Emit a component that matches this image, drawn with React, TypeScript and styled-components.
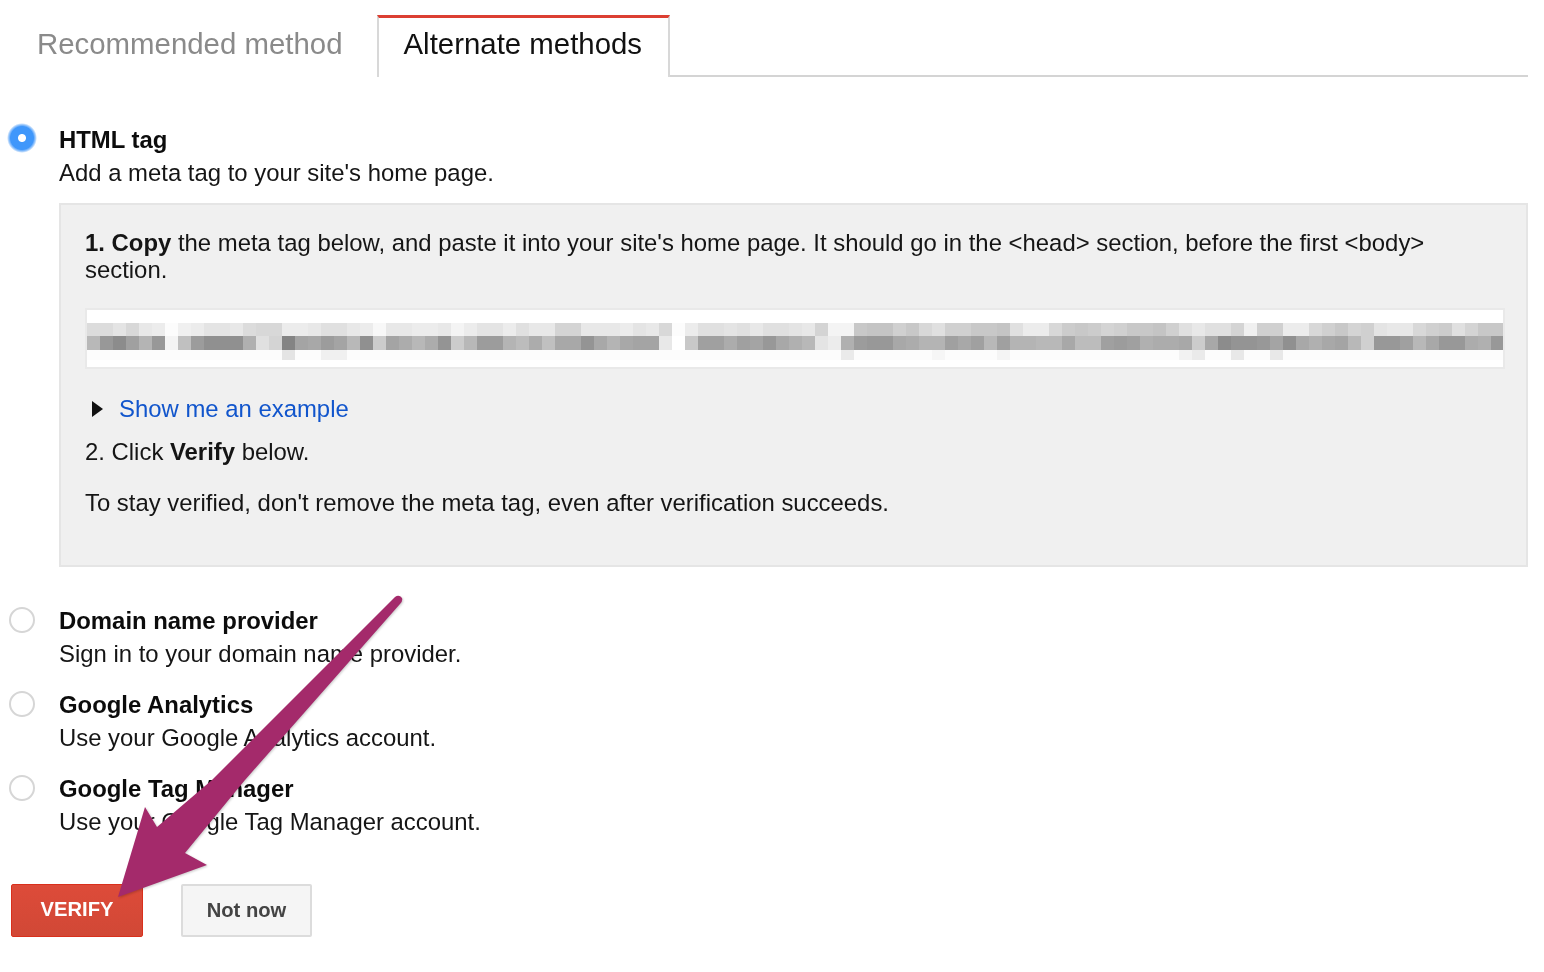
import styled, { createGlobalStyle } from "styled-components";

const GlobalStyle = createGlobalStyle`
  html, body {
    margin: 0;
    padding: 0;
    background: #fff;
  }
  body {
    font-family: "Liberation Sans", Arial, sans-serif;
    color: #111;
  }
`;

const Page = styled.div`
  position: relative;
  width: 1544px;
  height: 972px;
  overflow: hidden;
  box-sizing: border-box;
  padding: 15px 16px 0 11px;
  filter: blur(0.35px);
`;

const TabBar = styled.div`
  display: flex;
  height: 62px;
  box-sizing: border-box;
  border-bottom: 2px solid #d4d4d4;
`;

const Tab = styled.div<{ $active?: boolean }>`
  box-sizing: border-box;
  height: 62px;
  font-size: 29.4px;
  line-height: 52px;
  padding: ${(p) => (p.$active ? "0 26px 0 25px" : "3px 34px 0 26px")};
  color: ${(p) => (p.$active ? "#111" : "#8a8a8a")};
  background: #fff;
  ${(p) =>
    p.$active &&
    `
    border-top: 3px solid #dc3f32;
    border-left: 2px solid #d8d8d8;
    border-right: 2px solid #d8d8d8;
  `}
`;

const Methods = styled.div`
  display: flex;
  flex-direction: column;
`;

const Option = styled.div<{ $mt: number }>`
  display: flex;
  margin-top: ${(p) => p.$mt}px;
`;

const Radio = styled.div<{ $checked?: boolean }>`
  flex: none;
  box-sizing: border-box;
  border-radius: 50%;
  ${(p) =>
    p.$checked
      ? `
    width: 30px;
    height: 30px;
    margin: 0 22px 0 -4px;
    background: radial-gradient(circle, #fff 0 3.5px, #3f97fb 4.5px 11.5px, #a5cdfb 13.5px, #fff 15px);
    `
      : `
    width: 26px;
    height: 26px;
    margin: 3px 24px 0 -2px;
    background: #fff;
    border: 2px solid #d6d6d6;
    `}
`;

const OptionText = styled.div`
  display: flex;
  flex-direction: column;
  flex: 1;
`;

const OptionTitle = styled.div`
  font-size: 23.9px;
  line-height: 34px;
  font-weight: 700;
  color: #0c0c0c;
`;

const OptionHint = styled.div`
  font-size: 23.9px;
  line-height: 32px;
  color: #151515;
`;

const Panel = styled.div`
  box-sizing: border-box;
  height: 364px;
  margin: 14px 0 0 48px;
  padding: 24px 21px 0 24px;
  background: #f0f0f0;
  border: 2px solid #e5e5e5;
`;

const PanelText = styled.div<{ $mt?: number }>`
  font-size: 23.9px;
  line-height: 27px;
  margin-top: ${(p) => p.$mt ?? 0}px;
  color: #151515;
`;

const SnippetBox = styled.div`
  box-sizing: border-box;
  height: 61px;
  margin-top: 25px;
  padding-top: 13px;
  background: #fff;
  border: 2px solid #e9e9e9;
  overflow: hidden;
`;

const Mosaic = styled.div`
  display: grid;
  grid-template-columns: repeat(109, 13px);
  grid-template-rows: 13px 14px 10px;
`;

const ShowRow = styled.div`
  display: flex;
  align-items: center;
  margin-top: 26px;
  height: 27px;
`;

const Caret = styled.div`
  width: 0;
  height: 0;
  border-left: 11px solid #111;
  border-top: 8px solid transparent;
  border-bottom: 8px solid transparent;
  margin: 0 16px 0 7px;
`;

const ExampleLink = styled.a`
  font-size: 23.9px;
  color: #1155cc;
  text-decoration: none;
`;

const Actions = styled.div`
  display: flex;
  gap: 38px;
  margin-top: 46px;
`;

const Button = styled.div<{ $primary?: boolean }>`
  box-sizing: border-box;
  height: 53px;
  border-radius: 2px;
  font-size: 20.2px;
  font-weight: 700;
  line-height: 49px;
  text-align: center;
  ${(p) =>
    p.$primary
      ? `
    width: 132px;
    color: #fff;
    background: linear-gradient(#dd4b39, #d14836);
    border: 1px solid #d9301c;
  `
      : `
    width: 131px;
    color: #444;
    background: #f5f5f5;
    border: 2px solid #dcdcdc;
  `}
`;

const Arrow = styled.svg`
  position: absolute;
  left: 0;
  top: 0;
  pointer-events: none;
  filter: drop-shadow(1px 1px 1px rgba(0, 0, 0, 0.2));
`;

// grey levels of the pixelated meta tag, one hex pair per 13px cell
const topRow =
  "dc dc e4 d8 e8 ec fc f0 ec e4 e4 e8 dc d8 d8 ec ec e8 e0 e0 e8 ec f8 e8 e8 ec ec e8 f4 ec e4 e4 ec e0 e8 e8 d4 d4 e8 e8 e8 ec e4 e8 d8 fc ec e0 e0 e4 e0 e8 " +
  "e0 e0 e4 e8 d4 f4 f4 c8 c4 c4 d0 c8 d8 e0 d0 d0 c8 c8 c4 e0 ec ec d8 cc c8 cc d4 d0 c8 c8 c4 d0 e0 e8 e0 e0 d4 f0 d0 d0 ec ec d8 d0 c8 d4 d0 e4 e8 e8 d8 d0 cc e0 d4 c8 c8";
const midRow =
  "b8 98 8c a0 b4 98 f4 c0 9c 90 90 90 b0 e0 d4 84 a4 a8 9c a4 b8 90 cc a4 ac b8 ac 94 cc b8 9c 9c b4 bc ac c0 a8 a8 94 a8 b4 a8 a4 a4 e8 ff c8 a0 a0 ac a0 a4 " +
  "98 a8 b0 b8 e4 ec b0 9c 98 98 a8 ac b4 b4 a0 a8 a0 b8 a0 b4 b4 b8 b8 a8 bc bc a0 9c a0 b0 ac ac a8 cc a8 8c 94 94 98 a4 90 a8 b0 a8 a4 b8 d0 98 98 a0 b8 a8 98 98 ac b0 98";
const lowSpots: Record<number, string> = { 15: "e4", 18: "f0", 19: "f0", 58: "ea", 65: "f6", 70: "f4", 84: "f2", 85: "ea", 88: "e8", 91: "e8" };

const rows = [topRow.split(" "), midRow.split(" "), Array.from({ length: 109 }, (_, i) => lowSpots[i] ?? "fc")];

const methods = [
  { title: "Domain name provider", hint: "Sign in to your domain name provider.", mt: 37 },
  { title: "Google Analytics", hint: "Use your Google Analytics account.", mt: 18 },
  { title: "Google Tag Manager", hint: "Use your Google Tag Manager account.", mt: 18 },
];

export default function App() {
  return (
    <Page>
      <GlobalStyle />
      <TabBar>
        <Tab>Recommended method</Tab>
        <Tab $active>Alternate methods</Tab>
      </TabBar>
      <Methods>
        <Option $mt={46}>
          <Radio $checked />
          <OptionText>
            <OptionTitle>HTML tag</OptionTitle>
            <OptionHint>Add a meta tag to your site's home page.</OptionHint>
          </OptionText>
        </Option>
        <Panel>
          <PanelText>
            <b>1. Copy</b> the meta tag below, and paste it into your site's home page. It should go
            in the &lt;head&gt; section, before the first &lt;body&gt; section.
          </PanelText>
          <SnippetBox>
            <Mosaic>
              {rows.flatMap((row, r) =>
                row.map((g, i) => <div key={`${r}-${i}`} style={{ background: `#${g}${g}${g}` }} />)
              )}
            </Mosaic>
          </SnippetBox>
          <ShowRow>
            <Caret />
            <ExampleLink>Show me an example</ExampleLink>
          </ShowRow>
          <PanelText $mt={16}>
            2. Click <b>Verify</b> below.
          </PanelText>
          <PanelText $mt={24}>
            To stay verified, don't remove the meta tag, even after verification succeeds.
          </PanelText>
        </Panel>
        {methods.map((m) => (
          <Option key={m.title} $mt={m.mt}>
            <Radio />
            <OptionText>
              <OptionTitle>{m.title}</OptionTitle>
              <OptionHint>{m.hint}</OptionHint>
            </OptionText>
          </Option>
        ))}
      </Methods>
      <Actions>
        <Button $primary>VERIFY</Button>
        <Button>Not now</Button>
      </Actions>
      <Arrow width="1544" height="972" viewBox="0 0 1544 972">
        <path
          d="M118 897 L145 807 L157 827 L212 780 L395 597 Q399 594 402 598 Q403 601 400 604 L245 780 L185 853 L207 865 Z"
          fill="#a42a6b"
        />
      </Arrow>
    </Page>
  );
}
